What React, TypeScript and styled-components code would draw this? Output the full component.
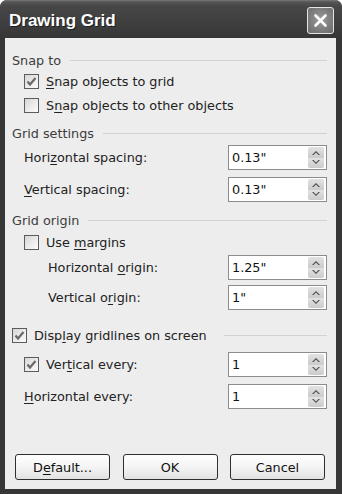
import React from 'react';
import styled, { createGlobalStyle } from 'styled-components';

const GlobalStyle = createGlobalStyle`
  html, body {
    margin: 0;
    padding: 0;
    background: #ffffff;
  }
  body {
    font-family: "DejaVu Sans", "Liberation Sans", sans-serif;
    font-size: 12.8px;
    color: #222;
  }
`;

const Window = styled.div`
  width: 342px;
  height: 494px;
  display: flex;
  flex-direction: column;
  background: #3a3a3a;
  border-radius: 7px 7px 0 0;
  overflow: hidden;
`;

const TitleBar = styled.div`
  flex: none;
  height: 38px;
  box-sizing: border-box;
  padding: 3px 8px 0 9px;
  display: flex;
  align-items: center;
  justify-content: space-between;
  background: linear-gradient(#7a7a7a 0, #555 2px, #474747 6px, #3e3e3e 24px, #363636 38px);
`;

const Title = styled.span`
  font-family: "Liberation Sans", Arial, sans-serif;
  font-weight: bold;
  font-size: 17px;
  color: #ffffff;
  text-shadow: 1px 1px 0 #1e1e1e;
`;

const CloseButton = styled.div`
  width: 27px;
  height: 27px;
  box-sizing: border-box;
  border: 1px solid #e4e4e4;
  border-radius: 3px;
  background: radial-gradient(circle at 50% 45%, #9a9a9a 0, #7c7c7c 60%, #6a6a6a 100%);
  display: flex;
  align-items: center;
  justify-content: center;
`;

const Frame = styled.div`
  flex: 1;
  display: flex;
  padding: 0 6px 5px 5px;
  background: #363636;
`;

const Body = styled.div`
  flex: 1;
  display: flex;
  flex-direction: column;
  padding: 0 9px 9px 7px;
  background: #ededed;
`;

const GroupHeader = styled.div<{ $top: number; $gap?: number }>`
  display: flex;
  align-items: center;
  height: 16px;
  margin-top: ${(p) => p.$top}px;
  color: #3c3c3c;

  &::after {
    content: '';
    flex: 1;
    height: 1px;
    margin-left: ${(p) => p.$gap ?? 9}px;
    background: #d2d2d2;
  }
`;

const Row = styled.div<{ $top: number; $indent: number; $height?: number }>`
  display: flex;
  align-items: center;
  height: ${(p) => p.$height ?? 25}px;
  margin-top: ${(p) => p.$top}px;
  padding-left: ${(p) => p.$indent}px;
`;

const DisplayRow = styled(Row)`
  &::after {
    content: '';
    flex: 1;
    height: 1px;
    margin-left: 17px;
    background: #d2d2d2;
  }
`;

const Box = styled.span`
  flex: none;
  width: 15px;
  height: 15px;
  box-sizing: border-box;
  border: 1px solid #5c5c5c;
  background: linear-gradient(135deg, #d6d6d6 0, #ececec 55%, #fbfbfb 100%);
  display: flex;
  align-items: center;
  justify-content: center;
  margin-right: 7px;
`;

const Mn = styled.span`
  text-decoration: underline;
  text-underline-offset: 2px;
`;

const Label = styled.span`
  white-space: nowrap;
`;

const Spin = styled.div`
  margin-left: auto;
  width: 99px;
  height: 25px;
  box-sizing: border-box;
  border: 1px solid #8c8c8c;
  background: #ffffff;
  display: flex;
  align-items: center;
  padding: 0 2px 0 3px;
`;

const SpinValue = styled.span`
  flex: 1;
  color: #111;
`;

const SpinButtons = styled.div`
  width: 16px;
  height: 21px;
  display: flex;
  flex-direction: column;
`;

const SpinHalf = styled.div<{ $down?: boolean }>`
  flex: 1;
  display: flex;
  align-items: center;
  justify-content: center;
  background: linear-gradient(#e2e2e2, #cbcbcb);
  border-radius: ${(p) => (p.$down ? '0 0 2px 2px' : '2px 2px 0 0')};
`;

const ButtonRow = styled.div`
  margin-top: auto;
  display: flex;
  justify-content: space-between;
  padding: 0 2px 0 3px;
`;

const Button = styled.div`
  width: 95px;
  height: 26px;
  box-sizing: border-box;
  border: 1px solid #2e2e2e;
  border-radius: 3px;
  background: linear-gradient(#ffffff 0, #f4f4f4 50%, #e2e2e2 100%);
  display: flex;
  align-items: center;
  justify-content: center;
  color: #111;
`;

const CheckMark = () => (
  <svg width="11" height="11" viewBox="0 0 11 11">
    <path d="M1.5 5.5 L4 8.5 L9.5 2" stroke="#6a6a6a" strokeWidth="2.2" fill="none" />
  </svg>
);

const Check = ({ checked }: { checked?: boolean }) => <Box>{checked && <CheckMark />}</Box>;

const Arrow = ({ down }: { down?: boolean }) => (
  <svg width="8" height="5" viewBox="0 0 8 5">
    <path d={down ? 'M0 0 L4 4 L8 0 L6.5 0 L4 2.5 L1.5 0 Z' : 'M0 5 L4 1 L8 5 L6.5 5 L4 2.5 L1.5 5 Z'} fill="#4a4a4a" />
  </svg>
);

const Spinner = ({ value }: { value: string }) => (
  <Spin>
    <SpinValue>{value}</SpinValue>
    <SpinButtons>
      <SpinHalf>
        <Arrow />
      </SpinHalf>
      <SpinHalf $down>
        <Arrow down />
      </SpinHalf>
    </SpinButtons>
  </Spin>
);

export default function App() {
  return (
    <>
      <GlobalStyle />
      <Window>
        <TitleBar>
          <Title>Drawing Grid</Title>
          <CloseButton>
            <svg width="15" height="15" viewBox="0 0 15 15">
              <path d="M2.5 2.5 L12.5 12.5 M12.5 2.5 L2.5 12.5" stroke="#fff" strokeWidth="2.6" strokeLinecap="round" />
            </svg>
          </CloseButton>
        </TitleBar>
        <Frame>
          <Body>
            <GroupHeader $top={14}>Snap to</GroupHeader>
            <Row $top={1} $indent={12} $height={24}>
              <Check checked />
              <Label>
                <Mn>S</Mn>nap objects to grid
              </Label>
            </Row>
            <Row $top={0} $indent={12} $height={24}>
              <Check />
              <Label>
                S<Mn>n</Mn>ap objects to other objects
              </Label>
            </Row>

            <GroupHeader $top={8}>Grid settings</GroupHeader>
            <Row $top={4} $indent={12}>
              <Label>
                Hori<Mn>z</Mn>ontal spacing:
              </Label>
              <Spinner value={'0.13"'} />
            </Row>
            <Row $top={7} $indent={12}>
              <Label>
                <Mn>V</Mn>ertical spacing:
              </Label>
              <Spinner value={'0.13"'} />
            </Row>

            <GroupHeader $top={10}>Grid origin</GroupHeader>
            <Row $top={2} $indent={12} $height={24}>
              <Check />
              <Label>
                Use <Mn>m</Mn>argins
              </Label>
            </Row>
            <Row $top={1} $indent={36}>
              <Label>
                Horizontal <Mn>o</Mn>rigin:
              </Label>
              <Spinner value={'1.25"'} />
            </Row>
            <Row $top={5} $indent={36}>
              <Label>
                Vertical o<Mn>r</Mn>igin:
              </Label>
              <Spinner value={'1"'} />
            </Row>

            <DisplayRow $top={13} $indent={0} $height={24}>
              <Check checked />
              <Label>
                Disp<Mn>l</Mn>ay gridlines on screen
              </Label>
            </DisplayRow>
            <Row $top={5} $indent={12}>
              <Check checked />
              <Label>
                Ver<Mn>t</Mn>ical every:
              </Label>
              <Spinner value="1" />
            </Row>
            <Row $top={7} $indent={12}>
              <Label>
                <Mn>H</Mn>orizontal every:
              </Label>
              <Spinner value="1" />
            </Row>

            <ButtonRow>
              <Button>
                D<Mn>e</Mn>fault...
              </Button>
              <Button>OK</Button>
              <Button>Cancel</Button>
            </ButtonRow>
          </Body>
        </Frame>
      </Window>
    </>
  );
}
